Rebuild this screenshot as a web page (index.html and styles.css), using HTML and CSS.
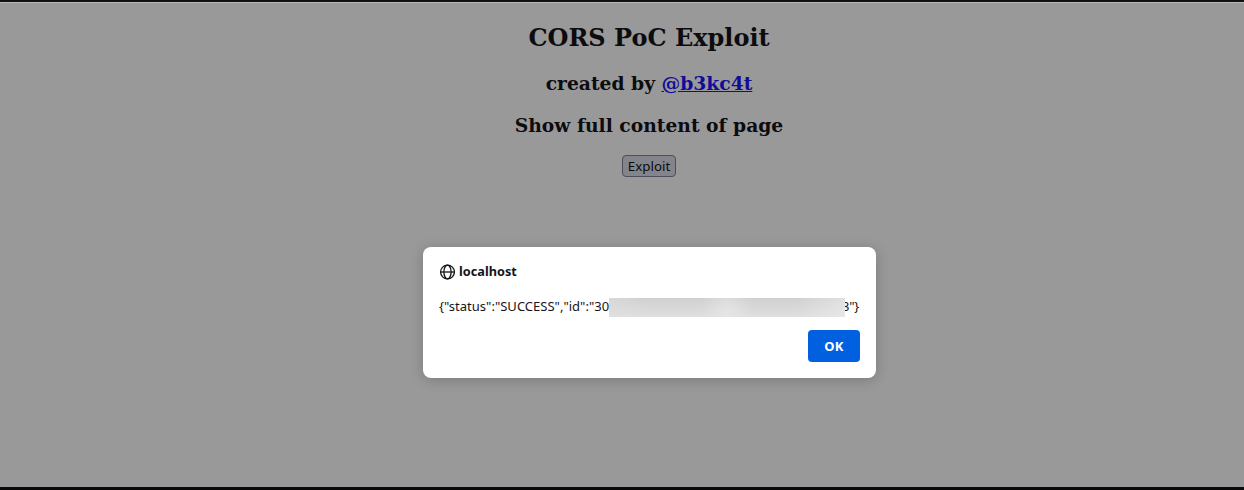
FILE: index.html
```html
<!DOCTYPE html>
<html lang="en">
<head>
<meta charset="utf-8">
<title>CORS PoC Exploit</title>
<link rel="stylesheet" href="styles.css">
</head>
<body>
<main class="page">
  <h2 class="title">CORS PoC Exploit</h2>
  <h3 class="subtitle">created by <a class="author" href="#">@b3kc4t</a></h3>
  <h3 class="subtitle">Show full content of page</h3>
  <button class="exploit" type="button">Exploit</button>
</main>
<section class="dialog" role="dialog" aria-label="localhost">
  <header class="origin">
    <svg class="globe" viewBox="0 0 16 16" fill="none" stroke="#15141a" stroke-width="1.3">
      <circle cx="8.5" cy="8" r="6.9"/>
      <ellipse cx="8.5" cy="8" rx="3.6" ry="6.9"/>
      <path d="M1.5 8h14"/>
    </svg>
    <span class="host">localhost</span>
  </header>
  <div class="message"><span class="start">{"status":"SUCCESS","id":"30</span><span class="redacted"></span><span class="end">3"}</span></div>
  <footer class="actions"><button class="ok" type="button">OK</button></footer>
</section>
</body>
</html>
```
FILE: styles.css
```css
* { box-sizing: border-box; }
html, body { height: 100%; }
body {
  margin: 0;
  overflow: hidden;
  background: #99999a;
  font-family: "DejaVu Serif", serif;
  color: #0c0c0e;
}
.page {
  height: 490px;
  padding: 20px 0 0 54px;
  border-top: 2px solid #121010;
  border-bottom: 3px solid #09090b;
  box-shadow: inset 0 1px #bcbab9;
  display: flex;
  flex-direction: column;
  align-items: center;
}
.title { margin: 2px 0 20px; font-size: 24px; line-height: 28px; }
.subtitle { margin: 0 0 20px; font-size: 18.72px; line-height: 22px; }
.author { color: #100c98; }
.exploit {
  width: 54px;
  height: 22px;
  margin-top: -1px;
  padding: 0;
  border: 1px solid #4e4d59;
  border-radius: 4px;
  background: #84848b;
  color: #0c0c0e;
  font: 13.33px/18px "Noto Sans", sans-serif;
  letter-spacing: 0;
}
.dialog {
  position: absolute;
  left: 423px;
  top: 247px;
  width: 453px;
  height: 131px;
  padding: 16px;
  border-radius: 8px;
  background: #fff;
  box-shadow: 0 2px 14px rgba(0, 0, 0, .2);
  color: #15141a;
  font: 13px/18px "Noto Sans", sans-serif;
}
.origin { display: flex; align-items: center; gap: 4px; height: 17px; }
.globe { width: 16px; height: 16px; }
.host { padding-bottom: 2px; font-weight: 700; font-size: 12.7px; letter-spacing: .02px; }
.message { display: flex; align-items: center; height: 19px; margin-top: 18px; white-space: nowrap; }
.start { width: 170px; padding-bottom: 3px; letter-spacing: .01px; }
.redacted {
  z-index: 1;
  width: 236px;
  height: 19px;
  background:
    radial-gradient(ellipse 26px 34px at 118px 12px, rgba(235, 235, 235, .6), transparent),
    linear-gradient(to right, rgba(225, 225, 225, .5), transparent 15%, transparent 80%, rgba(240, 240, 240, .5)),
    linear-gradient(#d0d0d1, #dfdfdf);
}
.end { margin-left: -3px; padding-bottom: 3px; letter-spacing: -.3px; }
.actions { display: flex; justify-content: flex-end; margin-top: 13px; }
.ok {
  width: 52px;
  height: 32px;
  padding: 0;
  border: 0;
  border-radius: 4px;
  background: #0060df;
  color: #fff;
  font: 700 13px/32px "Noto Sans", sans-serif;
  letter-spacing: .2px;
}
```
